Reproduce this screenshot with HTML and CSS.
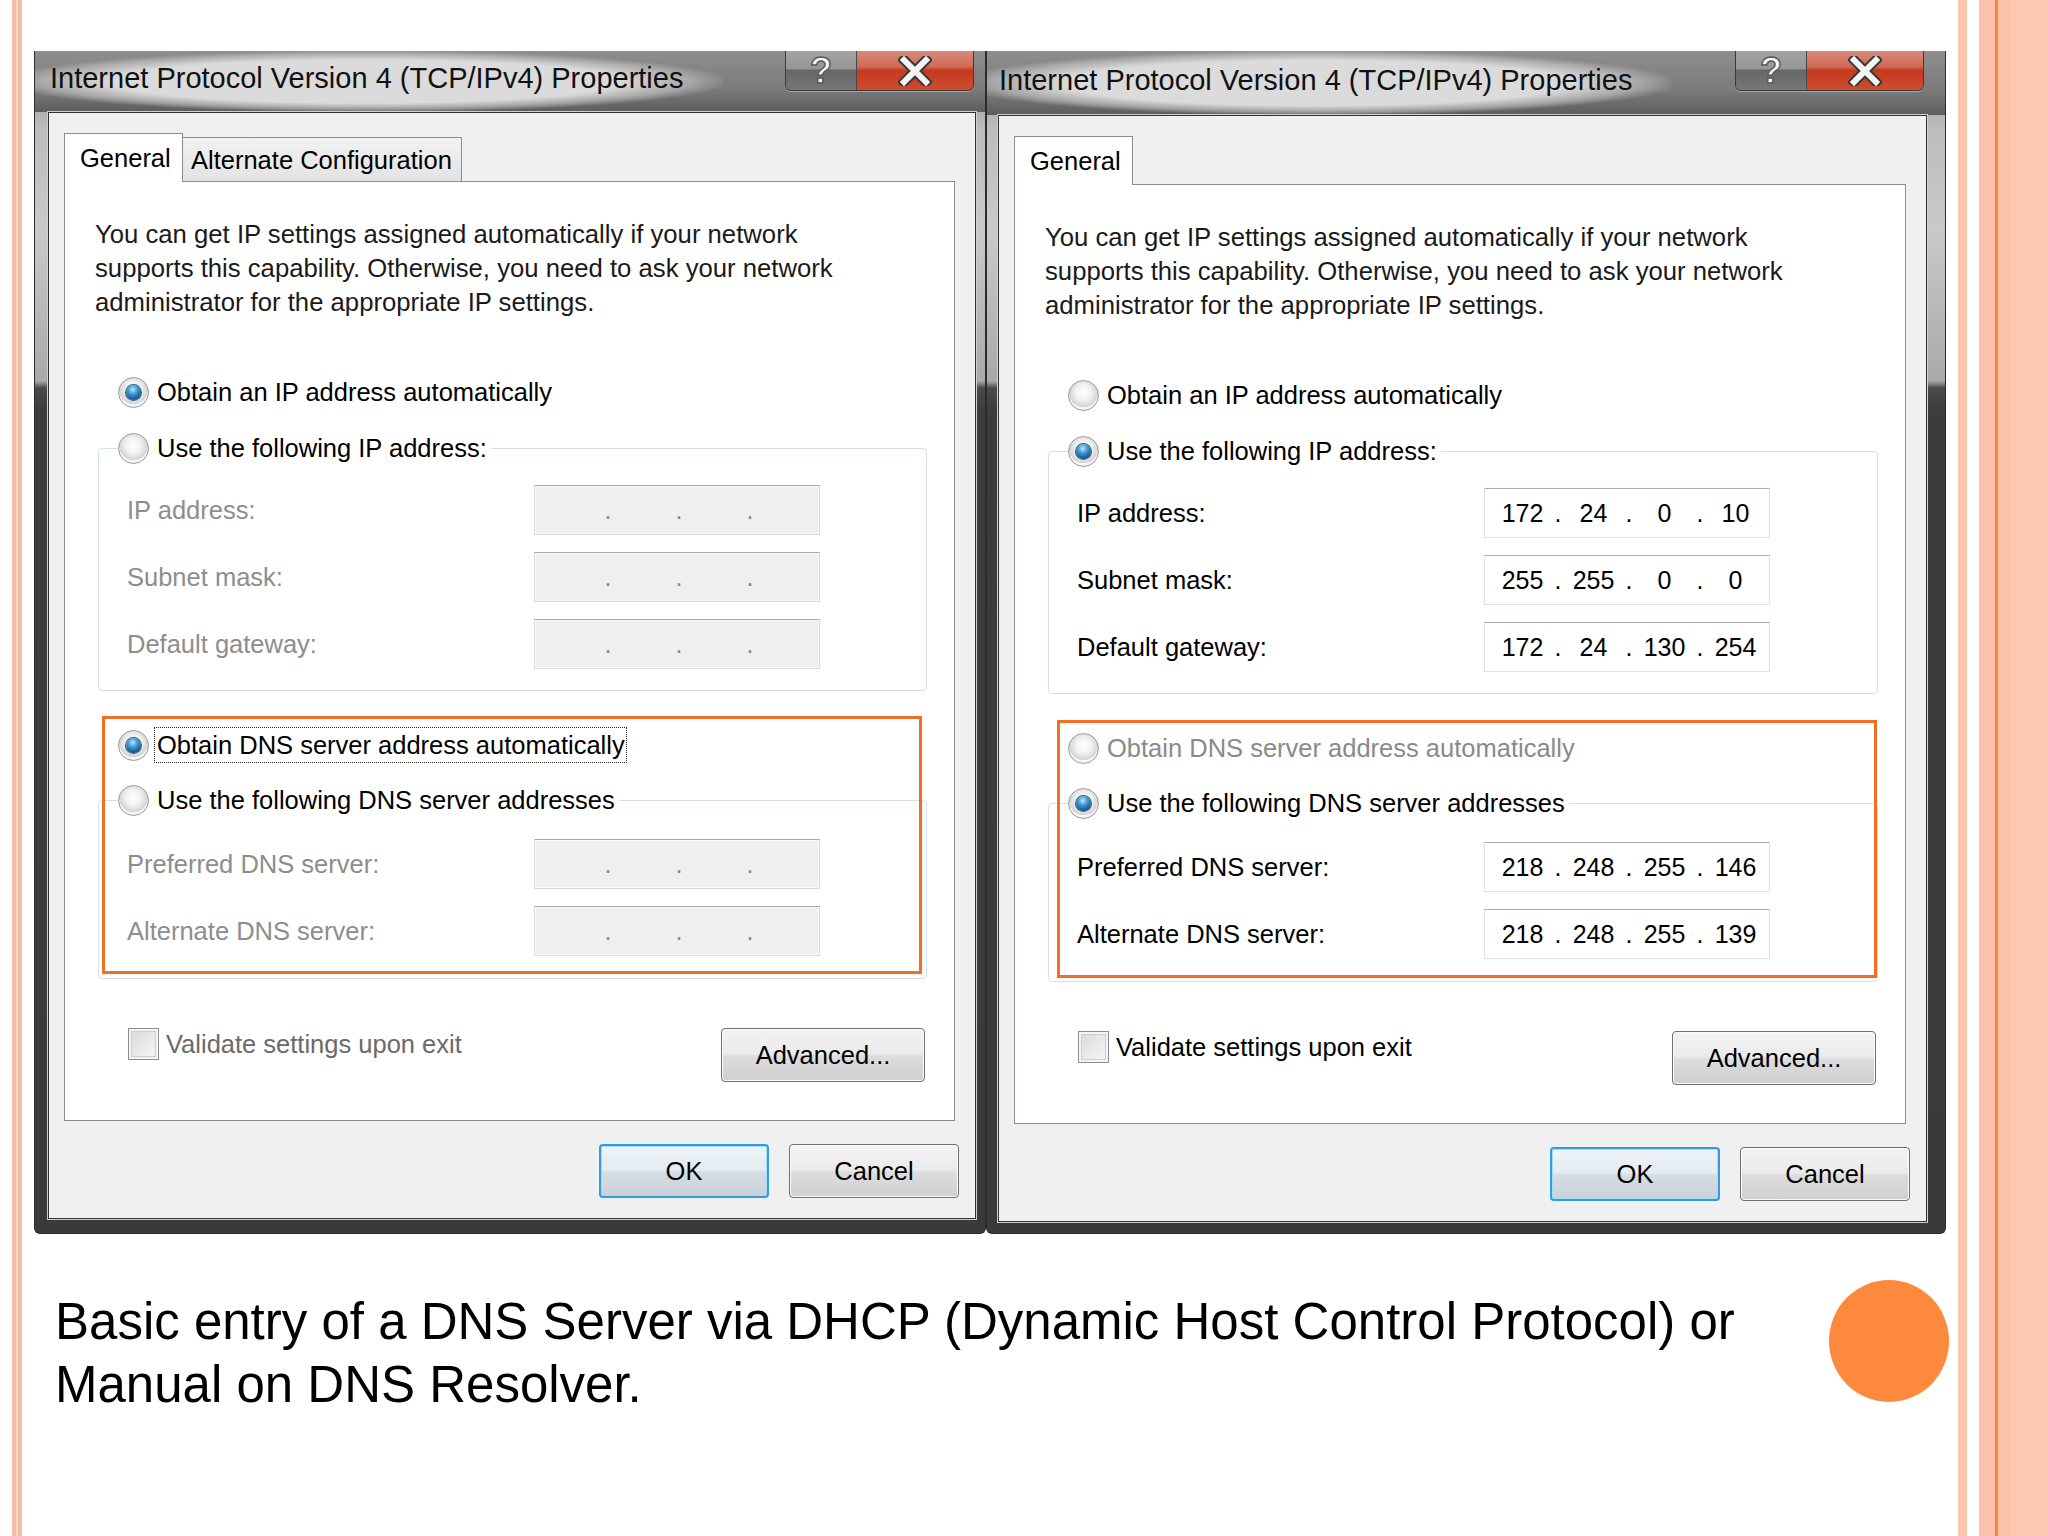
FILE: index.html
```html
<!DOCTYPE html>
<html lang="en">
<head>
    <meta charset="UTF-8">
    <title>DNS Server Entry</title>
    <link rel="stylesheet" href="styles.css">
</head>
<body>
<div class="slide">
    <div class="dialogs">

        <!-- DHCP dialog -->
        <div class="window window-left">
            <div class="titlebar">
                <span class="title">Internet Protocol Version 4 (TCP/IPv4) Properties</span>
                <div class="caption-buttons">
                    <span class="cap-btn cap-help">?</span>
                    <span class="cap-btn cap-close">
                        <svg width="34" height="30" viewBox="0 0 34 30"><path d="M6 4 L28 26 M28 4 L6 26" stroke="#3a3a3a" stroke-width="10" stroke-linecap="square"/><path d="M6 4 L28 26 M28 4 L6 26" stroke="#f4f4f4" stroke-width="6" stroke-linecap="square"/></svg>
                    </span>
                </div>
            </div>
            <div class="panel">
                <div class="tabs">
                    <span class="tab tab-active">General</span>
                    <span class="tab tab-alt">Alternate Configuration</span>
                </div>
                <div class="tab-page">
                    <p class="intro">You can get IP settings assigned automatically if your network<br>supports this capability. Otherwise, you need to ask your network<br>administrator for the appropriate IP settings.</p>
                    <div class="option option-first"><span class="radio on"></span><span>Obtain an IP address automatically</span></div>
                    <fieldset class="group group-ip">
                        <legend><div class="option"><span class="radio"></span><span>Use the following IP address:</span></div></legend>
                        <div class="field-grid disabled">
                            <span class="field-label">IP address:</span>
                            <div class="ipbox"><span></span><i>.</i><span></span><i>.</i><span></span><i>.</i><span></span></div>
                            <span class="field-label">Subnet mask:</span>
                            <div class="ipbox"><span></span><i>.</i><span></span><i>.</i><span></span><i>.</i><span></span></div>
                            <span class="field-label">Default gateway:</span>
                            <div class="ipbox"><span></span><i>.</i><span></span><i>.</i><span></span><i>.</i><span></span></div>
                        </div>
                    </fieldset>
                    <div class="option option-dns"><span class="radio on"></span><span class="focus">Obtain DNS server address automatically</span></div>
                    <fieldset class="group group-dns">
                        <legend><div class="option"><span class="radio"></span><span>Use the following DNS server addresses</span></div></legend>
                        <div class="field-grid disabled">
                            <span class="field-label">Preferred DNS server:</span>
                            <div class="ipbox"><span></span><i>.</i><span></span><i>.</i><span></span><i>.</i><span></span></div>
                            <span class="field-label">Alternate DNS server:</span>
                            <div class="ipbox"><span></span><i>.</i><span></span><i>.</i><span></span><i>.</i><span></span></div>
                        </div>
                    </fieldset>
                    <div class="footer-row">
                        <div class="option check-option muted"><span class="checkbox"></span><span>Validate settings upon exit</span></div>
                        <button class="btn btn-advanced">Advanced...</button>
                    </div>
                    <div class="highlight"></div>
                </div>
                <div class="dialog-buttons">
                    <button class="btn btn-default">OK</button>
                    <button class="btn">Cancel</button>
                </div>
            </div>
        </div>

        <!-- Manual dialog -->
        <div class="window window-right">
            <div class="titlebar">
                <span class="title">Internet Protocol Version 4 (TCP/IPv4) Properties</span>
                <div class="caption-buttons">
                    <span class="cap-btn cap-help">?</span>
                    <span class="cap-btn cap-close">
                        <svg width="34" height="30" viewBox="0 0 34 30"><path d="M6 4 L28 26 M28 4 L6 26" stroke="#3a3a3a" stroke-width="10" stroke-linecap="square"/><path d="M6 4 L28 26 M28 4 L6 26" stroke="#f4f4f4" stroke-width="6" stroke-linecap="square"/></svg>
                    </span>
                </div>
            </div>
            <div class="panel">
                <div class="tabs">
                    <span class="tab tab-active">General</span>
                </div>
                <div class="tab-page">
                    <p class="intro">You can get IP settings assigned automatically if your network<br>supports this capability. Otherwise, you need to ask your network<br>administrator for the appropriate IP settings.</p>
                    <div class="option option-first"><span class="radio"></span><span>Obtain an IP address automatically</span></div>
                    <fieldset class="group group-ip">
                        <legend><div class="option"><span class="radio on"></span><span>Use the following IP address:</span></div></legend>
                        <div class="field-grid">
                            <span class="field-label">IP address:</span>
                            <div class="ipbox"><span>172</span><i>.</i><span>24</span><i>.</i><span>0</span><i>.</i><span>10</span></div>
                            <span class="field-label">Subnet mask:</span>
                            <div class="ipbox"><span>255</span><i>.</i><span>255</span><i>.</i><span>0</span><i>.</i><span>0</span></div>
                            <span class="field-label">Default gateway:</span>
                            <div class="ipbox"><span>172</span><i>.</i><span>24</span><i>.</i><span>130</span><i>.</i><span>254</span></div>
                        </div>
                    </fieldset>
                    <div class="option option-dns grey"><span class="radio"></span><span>Obtain DNS server address automatically</span></div>
                    <fieldset class="group group-dns">
                        <legend><div class="option"><span class="radio on"></span><span>Use the following DNS server addresses</span></div></legend>
                        <div class="field-grid">
                            <span class="field-label">Preferred DNS server:</span>
                            <div class="ipbox"><span>218</span><i>.</i><span>248</span><i>.</i><span>255</span><i>.</i><span>146</span></div>
                            <span class="field-label">Alternate DNS server:</span>
                            <div class="ipbox"><span>218</span><i>.</i><span>248</span><i>.</i><span>255</span><i>.</i><span>139</span></div>
                        </div>
                    </fieldset>
                    <div class="footer-row">
                        <div class="option check-option"><span class="checkbox"></span><span>Validate settings upon exit</span></div>
                        <button class="btn btn-advanced">Advanced...</button>
                    </div>
                    <div class="highlight"></div>
                </div>
                <div class="dialog-buttons">
                    <button class="btn btn-default">OK</button>
                    <button class="btn">Cancel</button>
                </div>
            </div>
        </div>
    </div>

    <div class="caption">
        <p>Basic entry of a DNS Server via DHCP (Dynamic Host Control Protocol) or Manual on DNS Resolver.</p>
        <div class="bullet"></div>
    </div>
</div>
</body>
</html>
```

FILE: styles.css
```css
* {
    box-sizing: border-box;
}

body {
    margin: 0;
    font-family: "Liberation Sans", Arial, sans-serif;
    color: #000;
    background: linear-gradient(to right,
        #fff 0, #fff 12px,
        #f6bea6 12px, #f6bea6 16px,
        #fbd8c9 16px, #fbd8c9 18px,
        #f6bea6 18px, #f6bea6 22px,
        #fff 22px, #fff 1958px,
        #fbc6b0 1958px, #fbc6b0 1967px,
        #fff 1967px, #fff 1979px,
        #fbc2aa 1979px, #fbc2aa 1995px,
        #f5883f 1995px, #f5883f 1998px,
        #fbc2aa 1998px, #fbc2aa 2011px,
        #fcc9b5 2011px);
}

.slide {
    width: 2048px;
    height: 1536px;
    overflow: hidden;
}

.dialogs {
    display: flex;
    padding: 51px 0 0 34px;
}

/* ---------- window frame ---------- */

.window {
    display: flex;
    flex-direction: column;
    height: 1183px;
    border: 1px solid #2b2b2b;
    border-top: none;
    border-radius: 0 0 6px 6px;
    background: linear-gradient(to bottom, #8c8c8c 0, #bdbdbd 80px, #c9c9c9 180px, #a9a9a9 330px, #4a4a4a 337px, #3c3c3c 360px, #3a3a3a 100%);
}

.window-left {
    width: 952px;
}

.window-right {
    width: 960px;
}

.titlebar {
    display: flex;
    align-items: flex-start;
    height: 61px;
    background: linear-gradient(to bottom, #8e8e8e 0, #7c7c7c 60%, #5d5d5d 100%);
}

.window-right .titlebar {
    height: 64px;
}

.title {
    font-size: 29px;
    line-height: 34px;
    padding: 10px 40px 17px 15px;
    color: #111;
    background: radial-gradient(ellipse at 48% 50%, rgba(222, 222, 222, 0.97) 50%, rgba(196, 196, 196, 0.6) 64%, rgba(196, 196, 196, 0) 72%);
}

.window-right .title {
    padding: 12px 40px 18px 12px;
}

.caption-buttons {
    display: flex;
    margin-left: auto;
    margin-right: 11px;
    border: 1px solid #3a3a3a;
    border-top: none;
    border-radius: 0 0 6px 6px;
    overflow: hidden;
    box-shadow: 0 1px 0 rgba(255, 255, 255, 0.35);
}

.window-right .caption-buttons {
    margin-right: 21px;
}

.cap-btn {
    display: flex;
    align-items: center;
    justify-content: center;
    height: 39px;
}

.cap-help {
    width: 71px;
    font-size: 36px;
    line-height: 36px;
    font-weight: bold;
    color: #f7f7f7;
    -webkit-text-stroke: 1.5px #5a5a5a;
    border-right: 1px solid #4a4a4a;
    background: linear-gradient(to bottom, #a4a4a4 0, #969696 45%, #676767 50%, #777 100%);
}

.cap-close {
    width: 116px;
    background: linear-gradient(to bottom, #d98a7c 0, #cf6a55 40%, #c43a1f 50%, #cf4c2f 100%);
}

/* ---------- dialog body ---------- */

.panel {
    flex: 1;
    margin: 0 9px 14px 13px;
    padding: 20px 20px 20px 15px;
    background: #f0f0f0;
    border: 1px solid #333;
    box-shadow: 0 0 0 1px #cfcfcf;
}

.window-right .panel {
    margin: 0 18px 11px 11px;
}

.tabs {
    display: flex;
    align-items: flex-end;
    height: 48px;
}

.tab {
    font-size: 25.5px;
    line-height: 34px;
    border: 1px solid #898c95;
    border-bottom: none;
}

.tab-active {
    position: relative;
    z-index: 1;
    width: 119px;
    height: 49px;
    margin-bottom: -1px;
    padding: 7px 0 0 15px;
    background: #fff;
}

.tab-alt {
    width: 279px;
    height: 44px;
    padding: 5px 0 0 8px;
    border-left: none;
    background: linear-gradient(to bottom, #f2f2f2, #e3e3e3);
}

.tab-page {
    position: relative;
    height: 940px;
    padding: 35px 27px 0 33px;
    background: #fff;
    border: 1px solid #898c95;
}

.intro {
    margin: 0 0 0 -3px;
    font-size: 25.7px;
    line-height: 34px;
    color: #1a1a1a;
}

/* ---------- radios and checkboxes ---------- */

.option {
    display: flex;
    align-items: center;
    gap: 8px;
    height: 34px;
    font-size: 25.5px;
    white-space: nowrap;
}

.option-first {
    margin: 56px 0 0 20px;
}

.option-dns {
    margin: 37px 0 0 20px;
}

.grey {
    color: #8a8a8a;
}

.muted {
    color: #6a6a6a;
}

.radio {
    position: relative;
    flex: none;
    width: 31px;
    height: 31px;
    border-radius: 50%;
    border: 1px solid #9a9a9a;
    background: radial-gradient(circle at 50% 40%, #ffffff 0, #f1f1f1 35%, #d4d4d4 62%, #f6f6f6 66%, #eaeaea 100%);
}

.radio.on::after {
    content: "";
    position: absolute;
    left: 7px;
    top: 7px;
    width: 15px;
    height: 15px;
    border-radius: 50%;
    background: radial-gradient(circle at 45% 30%, #b7e9ff 0, #3f9ad3 35%, #11508a 75%, #0a3562 100%);
    box-shadow: 0 0 0 1px #2d5f86;
}

.focus {
    margin-left: -3px;
    padding: 0 1px 0 2px;
    line-height: 34px;
    border: 1px dotted #222;
}

.checkbox {
    flex: none;
    width: 31px;
    height: 32px;
    border: 1px solid #8f8f8f;
    box-shadow: inset 0 0 0 2px #f4f4f4, inset 0 0 0 3px #cfcfcf;
    background: linear-gradient(135deg, #d9d9d9, #f7f7f7);
}

.check-option {
    gap: 7px;
}

/* ---------- group boxes ---------- */

.group {
    margin: 22px 0 0 0;
    padding: 20px 0 21px 0;
    min-width: 0;
    border: 1px solid #d5dfe5;
    border-radius: 4px;
}

.group-dns {
    margin-top: 21px;
    padding: 22px 0 22px 0;
}

.group legend {
    margin-left: 19px;
    padding: 0 4px 0 0;
}

.field-grid {
    display: grid;
    grid-template-columns: 407px 286px;
    row-gap: 17px;
    align-items: center;
    padding-left: 28px;
    font-size: 25.5px;
}

.field-grid.disabled .field-label {
    color: #8d8d8d;
}

.ipbox {
    display: flex;
    align-items: center;
    height: 50px;
    padding-left: 11px;
    font-size: 25px;
    background: #fff;
    border: 1px solid #dde1e7;
    border-top-color: #a5acb5;
}

.ipbox span {
    width: 53px;
    text-align: center;
}

.ipbox i {
    width: 18px;
    font-style: normal;
    text-align: center;
}

.disabled .ipbox {
    color: #85869a;
    background: #f0eff0;
    border-color: #dadada;
    border-top-color: #a8a8a8;
    box-shadow: inset 0 0 0 1px #f9f9f9;
}

.highlight {
    position: absolute;
    left: 37px;
    top: 534px;
    width: 820px;
    height: 258px;
    border: 3px solid #f26e22;
    pointer-events: none;
}

.window-right .highlight {
    left: 42px;
    top: 535px;
}

.footer-row {
    display: flex;
    justify-content: space-between;
    align-items: flex-start;
    margin-top: 48px;
    padding: 0 2px 0 30px;
}

/* ---------- buttons ---------- */

.btn {
    font-family: "Liberation Sans", Arial, sans-serif;
    font-size: 25.5px;
    color: #000;
    height: 54px;
    padding: 0;
    border: 1px solid #707070;
    border-radius: 4px;
    background: linear-gradient(to bottom, #f3f3f3 0, #ebebeb 48%, #dddddd 52%, #cfcfcf 100%);
    box-shadow: inset 0 0 0 1px #fbfbfb;
}

.btn-advanced {
    width: 204px;
    margin-top: 1px;
}

.dialog-buttons {
    display: flex;
    justify-content: flex-end;
    gap: 20px;
    margin: 23px -4px 0 0;
}

.dialog-buttons .btn {
    width: 170px;
}

.btn-default {
    border: 2px solid #2f9de0;
    box-shadow: inset 0 0 0 1px #a9dcf6;
    background: linear-gradient(to bottom, #eef4f8 0, #e4ecf1 48%, #d3dde3 52%, #c8d2d8 100%);
}

/* ---------- slide caption ---------- */

.caption {
    display: flex;
    justify-content: space-between;
    align-items: flex-start;
    margin-top: 46px;
    padding: 0 99px 0 55px;
}

.caption p {
    width: 1740px;
    margin: 0;
    padding-top: 10px;
    font-size: 51px;
    line-height: 63px;
    color: #000;
}

.bullet {
    width: 120px;
    height: 122px;
    border-radius: 50%;
    background: #fd8a3c;
}
```
